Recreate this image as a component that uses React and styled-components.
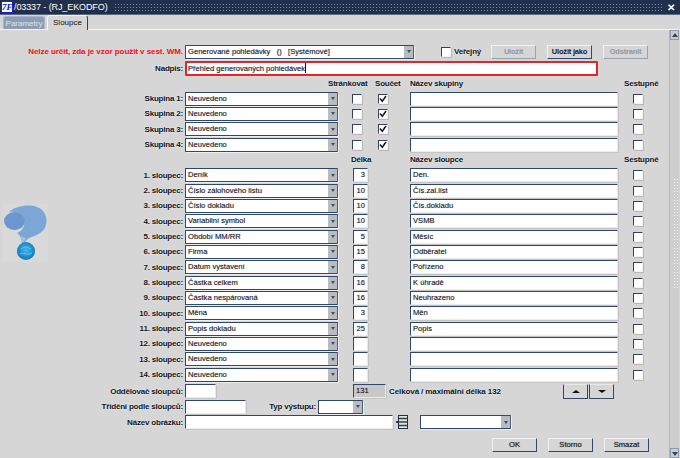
import React from "react";
import styled, { createGlobalStyle } from "styled-components";

const GlobalStyle = createGlobalStyle`
  html, body {
    margin: 0;
    padding: 0;
    background: #d6d6d6;
  }
  body {
    font-family: "Liberation Sans", Arial, sans-serif;
    font-size: 9px;
    color: #101010;
  }
  * {
    box-sizing: border-box;
  }
`;

const Win = styled.div`
  width: 680px;
  height: 458px;
  display: flex;
  flex-direction: column;
  overflow: hidden;
  background: #d6d6d6;
`;

const TitleBar = styled.div`
  height: 15px;
  flex: none;
  display: flex;
  align-items: center;
  background: #1f2f4c;
  border-bottom: 1px solid #5b6a80;
  color: #fff;
  font-size: 9px;
  letter-spacing: -0.1px;
  padding-left: 1px;
`;

const AppIcon = styled.div`
  width: 12px;
  height: 12px;
  flex: none;
  background: #f4f6ff;
  border: 1px solid #2020c0;
  color: #1a1a9a;
  font: italic bold 9px/10px "Liberation Serif", serif;
  text-align: center;
  margin-right: 1px;
`;

const Dots = styled.div`
  flex: 1;
  height: 9px;
  margin: 0 5px 0 6px;
  background-image: radial-gradient(circle, #7d8ba0 0.7px, transparent 0.9px);
  background-size: 3px 3px;
`;

const Close = styled.div`
  width: 12px;
  flex: none;
  font: bold 10px/13px "Liberation Sans", sans-serif;
  margin-right: 1px;
`;

const TabBar = styled.div`
  height: 15px;
  flex: none;
  display: flex;
  align-items: flex-end;
  padding-left: 3px;
  gap: 2px;
  border-bottom: 1px solid #f4f4f4;
`;

const Tab = styled.div`
  width: ${p => (p.$active ? "41px" : "42px")};
  height: ${p => (p.$active ? "15px" : "13px")};
  margin-bottom: ${p => (p.$active ? "-1px" : "0")};
  text-align: center;
  font-size: 8px;
  line-height: 13px;
  border-radius: 3px 3px 0 0;
  background: ${p => (p.$active ? "#d6d6d6" : "#8c9db4")};
  color: ${p => (p.$active ? "#101010" : "#dfe4ea")};
  border-top: 1px solid ${p => (p.$active ? "#f4f4f4" : "#a8b5c6")};
  border-left: 1px solid ${p => (p.$active ? "#f4f4f4" : "#a8b5c6")};
  border-right: 1px solid ${p => (p.$active ? "#33435f" : "#a8b5c6")};
`;

const Body = styled.div`
  flex: 1;
  display: flex;
  min-height: 0;
`;

const Form = styled.div`
  flex: 1;
  padding-top: 14px;
  display: flex;
  flex-direction: column;
`;

const Scroll = styled.div`
  width: 10px;
  flex: none;
  margin-right: 1px;
  display: flex;
  flex-direction: column;
  border-left: 1px solid #a9b8cc;
  background: #cecece;
`;

const ScrollBtn = styled.div`
  height: 10px;
  flex: none;
  background: #c9ccd2;
  border: 1px solid #8e99aa;
  display: flex;
  align-items: center;
  justify-content: center;
`;

const ScrollDots = styled.div`
  flex: 1;
  margin: 138px 1px 158px 3px;
  background-image: radial-gradient(circle, #f5f5f5 0.8px, transparent 1px);
  background-size: 3px 3px;
`;

const gridCols = "185px 153px 38px 34px 208px 40px";

const Row = styled.div`
  display: grid;
  grid-template-columns: ${gridCols};
  height: ${p => p.$h || "15.33px"};
  align-items: center;
`;

const ColumnsGrid = styled.div`
  display: grid;
  grid-template-columns: ${gridCols};
  grid-auto-rows: 15.33px;
  align-items: center;
`;

const Label = styled.div`
  font-weight: bold;
  font-size: 8px;
  letter-spacing: ${p => (p.$red ? "-0.06px" : "-0.2px")};
  text-align: right;
  padding-right: 2px;
  white-space: nowrap;
  grid-column: 1;
  grid-row: ${p => p.$row || "auto"};
  color: ${p => (p.$red ? "#ee1111" : "#0c1220")};
  text-shadow: ${p => (p.$red ? "none" : "0 0 2px #fff")};
`;

const Head = styled.div`
  font-weight: bold;
  font-size: 8px;
  letter-spacing: -0.2px;
  white-space: nowrap;
  color: #0c1220;
  text-shadow: 0 0 2px #fff;
  margin-left: ${p => p.$ml || "0"};
`;

const ComboBox = styled.div`
  height: 14px;
  width: ${p => p.$w || "100%"};
  display: flex;
  align-items: stretch;
  flex: none;
  background: #fff;
  border: 1px solid #2f466f;
  border-right-color: #4a5f84;
  border-radius: 1px;
  box-shadow: 1px 1px 0 #eeeeee;
  overflow: hidden;
`;

const ComboText = styled.div`
  flex: 1;
  padding-left: 2px;
  font-size: 7.6px;
  line-height: 12px;
  white-space: pre;
  color: #15151f;
  text-shadow: 0 0 1px rgba(0, 0, 0, 0.35);
`;

const ComboArrow = styled.div`
  width: 9px;
  flex: none;
  background: #b9bbbf;
  display: flex;
  align-items: center;
  justify-content: center;
  &::after {
    content: "";
    border-left: 2.5px solid transparent;
    border-right: 2.5px solid transparent;
    border-top: 3px solid #3c4f70;
  }
`;

const Combo = ({ children, w }) => (
  <ComboBox $w={w}>
    <ComboText>{children}</ComboText>
    <ComboArrow />
  </ComboBox>
);

const Input = styled.div`
  height: 14px;
  width: ${p => p.$w || "100%"};
  flex: none;
  margin-left: ${p => p.$ml || "0"};
  background: ${p => (p.$gray ? "#c8c8c8" : "#fff")};
  border-top: 1px solid #2f466f;
  border-left: 1px solid #2f466f;
  border-right: 1px solid #e8e8e8;
  border-bottom: 1px solid #ececec;
  box-shadow: 1px 1px 0 #c4c4c4;
  font-size: 7.6px;
  line-height: 12.5px;
  padding: 0 2px;
  color: #15151f;
  text-shadow: 0 0 1px rgba(0, 0, 0, 0.35);
  text-align: ${p => (p.$right ? "right" : "left")};
  white-space: nowrap;
`;

const CheckBox = styled.div`
  width: 10px;
  height: 10px;
  margin-left: ${p => p.$ml || "0"};
  flex: none;
  background: #fff;
  border-top: 1px solid #35425c;
  border-left: 1px solid #35425c;
  border-right: 1px solid #f2f2f2;
  border-bottom: 1px solid #f2f2f2;
  box-shadow: 1px 1px 0 #b8b8b8;
  display: flex;
`;

const Check = ({ on, ml }) => (
  <CheckBox $ml={ml}>
    {on && (
      <svg width="8" height="8" viewBox="0 0 8 8">
        <path d="M1 3.5 L3.3 6.2 L7 1" fill="none" stroke="#15151f" strokeWidth="1.5" />
      </svg>
    )}
  </CheckBox>
);

const Button = styled.div`
  width: ${p => p.$w || "45px"};
  height: 14px;
  flex: none;
  font-size: ${p => (p.$bold ? "7.5px" : "7.6px")};
  letter-spacing: ${p => (p.$bold ? "-0.2px" : "0")};
  line-height: 12px;
  text-align: center;
  background: #d6d6d6;
  color: ${p => (p.$off ? "#8d97a8" : "#15151f")};
  font-weight: ${p => (p.$bold ? "bold" : "normal")};
  text-shadow: ${p => (p.$bold ? "none" : "0 0 1px rgba(0, 0, 0, 0.5)")};
  border-top: 1px solid #f2f2f2;
  border-left: 1px solid #f2f2f2;
  border-right: 1px solid ${p => (p.$off ? "#9aa3b2" : "#2f466f")};
  border-bottom: 1px solid ${p => (p.$off ? "#9aa3b2" : "#2f466f")};
`;

const ArrowBtn = styled(Button)`
  width: 25px;
  height: 15px;
  display: flex;
  align-items: center;
  justify-content: center;
  border-left-color: #2f466f;
  border-top-color: #e8e8e8;
  &::after {
    content: "";
    border-left: 4px solid transparent;
    border-right: 4px solid transparent;
    ${p => (p.$up ? "border-bottom: 3.5px solid #101010;" : "border-top: 3.5px solid #101010;")}
  }
`;

const TopRow = styled.div`
  display: flex;
  align-items: center;
  height: 15px;
`;

const LabelCell = styled.div`
  width: 185px;
  flex: none;
`;

const PublicBox = styled.div`
  display: flex;
  align-items: center;
  gap: 3px;
  margin-left: 27px;
  width: 50px;
  flex: none;
`;

const Buttons = styled.div`
  display: flex;
  gap: 11px;
  margin-left: ${p => p.$ml || "0"};
  margin-top: ${p => p.$mt || "0"};
`;

const TitleBox = styled.div`
  width: 413px;
  height: 15px;
  background: #fff;
  border: 2px solid #e2252b;
  border-radius: 1px;
  font-size: 7.6px;
  line-height: 11px;
  padding-left: 1px;
  white-space: nowrap;
  color: #15151f;
  text-shadow: 0 0 1px rgba(0, 0, 0, 0.35);
`;

const Caret = styled.span`
  display: inline-block;
  width: 1px;
  height: 10px;
  background: #101010;
  vertical-align: top;
`;

const FlexRow = styled.div`
  display: flex;
  align-items: center;
  height: ${p => p.$h || "15.5px"};
  margin-top: ${p => p.$mt || "0"};
`;

const Total = styled.div`
  font-weight: bold;
  font-size: 8px;
  letter-spacing: -0.1px;
  margin-left: 3px;
  width: 174px;
  flex: none;
  white-space: nowrap;
  color: #0c1220;
  text-shadow: 0 0 2px #fff;
`;

const ArrowPair = styled.div`
  display: flex;
  gap: 1px;
`;

const InlineLabel = styled.div`
  font-weight: bold;
  font-size: 8px;
  letter-spacing: -0.2px;
  white-space: nowrap;
  margin-left: 21px;
  margin-right: 2px;
  width: 49px;
  flex: none;
  text-align: right;
  color: #0c1220;
  text-shadow: 0 0 2px #fff;
`;

const QuestionWrap = styled.div`
  grid-column: 1;
  grid-row: 3 / span 6;
  align-self: start;
  margin: 21px 0 0 3px;
  width: 45px;
  height: 58px;
  background: #d9d9d9;
`;

const QuestionMark = () => (
  <QuestionWrap>
    <svg width="45" height="58" viewBox="0 0 45 58">
      <defs>
        <radialGradient id="ball" cx="0.5" cy="0.45" r="0.6">
          <stop offset="0" stopColor="#45b6ea" />
          <stop offset="1" stopColor="#0d74b4" />
        </radialGradient>
      </defs>
      <path
        d="M6 8 C12 2 26 0 34 3 C42 6 45 14 43 21 C41 29 32 32 26 34 C23 36 22 38 21 40 L19 40 C19 35 17 31 14 29 C20 27 23 20 21 14 C19 9 11 7 6 8 Z"
        fill="#7ba6d6"
      />
      <ellipse cx="11.5" cy="17" rx="10.5" ry="9" fill="#6b96cf" />
      <path d="M18 32 L19 38 L21 38 L23 34 Z" fill="#a9bdd4" />
      <circle cx="23" cy="47" r="9" fill="url(#ball)" />
      <path d="M18 45 C21 42 25 43 28 45 M17 50 C20 48 24 52 29 49" stroke="#5cc8f0" strokeWidth="1" fill="none" />
    </svg>
  </QuestionWrap>
);

const ListSvg = styled.svg`
  margin-left: 3px;
  flex: none;
`;

const ListIcon = () => (
  <ListSvg width="12" height="14" viewBox="0 0 12 14">
    <path d="M0 7 H2" stroke="#101010" strokeWidth="1.6" />
    <rect x="2.5" y="0.5" width="9" height="13" fill="#eee9a8" stroke="#1f2f4c" />
    <path d="M3 3.5 H11 M3 7 H11 M3 10.5 H11" stroke="#1f3f90" strokeWidth="1.4" />
  </ListSvg>
);

const Gap = styled.div`
  flex: none;
  width: ${p => p.$w || "0"};
`;

const groups = [1, 2, 3, 4];

const cols = [
  ["Deník", "3", "Den."],
  ["Číslo zálohového listu", "10", "Čís.zal.list"],
  ["Číslo dokladu", "10", "Čís.dokladu"],
  ["Variabilní symbol", "10", "VSMB"],
  ["Období MM/RR", "5", "Měsíc"],
  ["Firma", "15", "Odběratel"],
  ["Datum vystavení", "8", "Pořízeno"],
  ["Částka celkem", "16", "K úhradě"],
  ["Částka nespárovaná", "16", "Neuhrazeno"],
  ["Měna", "3", "Měn"],
  ["Popis dokladu", "25", "Popis"],
  ["Neuvedeno", "", ""],
  ["Neuvedeno", "", ""],
  ["Neuvedeno", "", ""],
];

export default function App() {
  return (
    <Win>
      <GlobalStyle />
      <TitleBar>
        <AppIcon>7F</AppIcon>
        /03337 - (RJ_EKODFO)
        <Dots />
        <Close>✕</Close>
      </TitleBar>
      <TabBar>
        <Tab>Parametry</Tab>
        <Tab $active>Sloupce</Tab>
      </TabBar>
      <Body>
        <Form>
          <TopRow>
            <LabelCell>
              <Label $red>Nelze určit, zda je vzor použit v sest. WM.</Label>
            </LabelCell>
            <Combo w="229px">{"Generované pohledávky   ()   [Systémové]"}</Combo>
            <PublicBox>
              <Check />
              <Head>Veřejný</Head>
            </PublicBox>
            <Buttons>
              <Button $off $bold>Uložit</Button>
              <Button $bold>Uložit jako</Button>
              <Button $off $bold>Odstranit</Button>
            </Buttons>
          </TopRow>
          <FlexRow $h="16px" $mt="1px">
            <LabelCell>
              <Label>Nadpis:</Label>
            </LabelCell>
            <TitleBox>
              Přehled generovaných pohledávek<Caret />
            </TitleBox>
          </FlexRow>
          <Row $h="15px">
            <span />
            <span />
            <Head $ml="-10px">Stránkovat</Head>
            <Head $ml="-1px">Součet</Head>
            <Head>Název skupiny</Head>
            <Head $ml="6px">Sestupně</Head>
          </Row>
          {groups.map(n => (
            <Row key={n}>
              <Label>Skupina {n}:</Label>
              <Combo>Neuvedeno</Combo>
              <Check ml="14px" />
              <Check ml="2px" on />
              <Input />
              <Check ml="15px" />
            </Row>
          ))}
          <ColumnsGrid>
            <span />
            <span />
            <Head $ml="13px">Délka</Head>
            <span />
            <Head>Název sloupce</Head>
            <Head $ml="6px">Sestupně</Head>
            <QuestionMark />
            {cols.map((c, i) => (
              <React.Fragment key={i}>
                <Label $row={i + 2}>{i + 1}. sloupec:</Label>
                <Combo>{c[0]}</Combo>
                <Input $w="15px" $ml="15px" $right>{c[1]}</Input>
                <span />
                <Input>{c[2]}</Input>
                <Check ml="15px" />
              </React.Fragment>
            ))}
          </ColumnsGrid>
          <FlexRow $h="16px" $mt="1px">
            <LabelCell>
              <Label>Oddělovač sloupců:</Label>
            </LabelCell>
            <Input $w="31px" />
            <Gap $w="137px" />
            <Input $w="33px" $gray>131</Input>
            <Total>Celková / maximální délka 132</Total>
            <ArrowPair>
              <ArrowBtn $up />
              <ArrowBtn />
            </ArrowPair>
          </FlexRow>
          <FlexRow>
            <LabelCell>
              <Label>Třídění podle sloupců:</Label>
            </LabelCell>
            <Input $w="61px" />
            <InlineLabel>Typ výstupu:</InlineLabel>
            <Combo w="45px" />
          </FlexRow>
          <FlexRow $h="15px">
            <LabelCell>
              <Label>Název obrázku:</Label>
            </LabelCell>
            <Input $w="208px" />
            <ListIcon />
            <Gap $w="12px" />
            <Combo w="91px" />
          </FlexRow>
          <Buttons $ml="492px" $mt="8px">
            <Button>OK</Button>
            <Button>Storno</Button>
            <Button>Smazat</Button>
          </Buttons>
        </Form>
        <Scroll>
          <ScrollBtn>
            <svg width="6" height="5" viewBox="0 0 6 5"><path d="M0 4 L3 0 L6 4 Z" fill="#33435f" /></svg>
          </ScrollBtn>
          <ScrollDots />
          <ScrollBtn>
            <svg width="6" height="5" viewBox="0 0 6 5"><path d="M0 1 L3 5 L6 1 Z" fill="#33435f" /></svg>
          </ScrollBtn>
        </Scroll>
      </Body>
    </Win>
  );
}
